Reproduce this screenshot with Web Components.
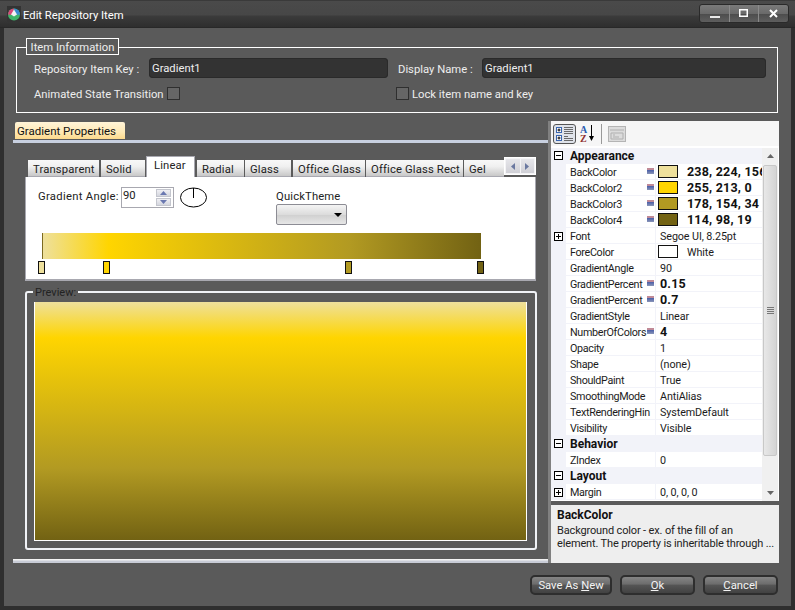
<!DOCTYPE html>
<html>
<head>
<meta charset="utf-8">
<title>Edit Repository Item</title>
<style>
  html, body { margin: 0; padding: 0; background: #5a5a5a; }
  body { font: 11.25px Roboto, "Open Sans", sans-serif; }
</style>
</head>
<body>
<edit-window>
  <window-titlebar slot="title">Edit Repository Item</window-titlebar>

  <item-info></item-info>

  <div style="display:flex;margin-top:8px;height:442px;">
    <gradient-pane></gradient-pane>
    <div style="width:228px;display:flex;flex-direction:column;gap:4px;border-left:3px solid #808080;">
      <prop-grid>
        <prop-cat name="Appearance"></prop-cat>
        <prop-row name="BackColor" value="238, 224, 156" swatch="#eee09c" bold mod></prop-row>
        <prop-row name="BackColor2" value="255, 213, 0" swatch="#ffd500" bold mod></prop-row>
        <prop-row name="BackColor3" value="178, 154, 34" swatch="#b29a22" bold mod></prop-row>
        <prop-row name="BackColor4" value="114, 98, 19" swatch="#726213" bold mod></prop-row>
        <prop-row name="Font" value="Segoe UI, 8.25pt" plus></prop-row>
        <prop-row name="ForeColor" value="White" swatch="#ffffff"></prop-row>
        <prop-row name="GradientAngle" value="90"></prop-row>
        <prop-row name="GradientPercent" value="0.15" bold mod></prop-row>
        <prop-row name="GradientPercent" value="0.7" bold mod></prop-row>
        <prop-row name="GradientStyle" value="Linear"></prop-row>
        <prop-row name="NumberOfColors" value="4" bold mod></prop-row>
        <prop-row name="Opacity" value="1"></prop-row>
        <prop-row name="Shape" value="(none)"></prop-row>
        <prop-row name="ShouldPaint" value="True"></prop-row>
        <prop-row name="SmoothingMode" value="AntiAlias"></prop-row>
        <prop-row name="TextRenderingHin" value="SystemDefault"></prop-row>
        <prop-row name="Visibility" value="Visible"></prop-row>
        <prop-cat name="Behavior"></prop-cat>
        <prop-row name="ZIndex" value="0"></prop-row>
        <prop-cat name="Layout"></prop-cat>
        <prop-row name="Margin" value="0, 0, 0, 0" plus></prop-row>
      </prop-grid>
      <prop-desc name="BackColor">Background color - ex. of the fill of an<br>element. The property is inheritable through ...</prop-desc>
    </div>
  </div>

  <div style="display:flex;justify-content:flex-end;gap:8px;margin-top:12px;padding-right:1px;">
    <dark-button style="width:82px"><span>Save As <u>N</u>ew</span></dark-button>
    <dark-button style="width:75px"><u>O</u>k</dark-button>
    <dark-button style="width:75px"><u>C</u>ancel</dark-button>
  </div>
</edit-window>

<script>
class EditWindow extends HTMLElement {
  constructor() {
    super();
    this.attachShadow({ mode: "open" });
    this.shadowRoot.innerHTML = `
    <style>
      :host {
        display: flex;
        flex-direction: column;
        width: 795px;
        height: 610px;
        box-sizing: border-box;
        background: #5a5a5a;
        color: #fff;
        overflow: hidden;
      }
      .body {
        flex: 1;
        border-left: 4px solid #2f2f2f;
        border-right: 4px solid #2f2f2f;
        border-bottom: 4px solid #2f2f2f;
        padding: 10px 12px 0 9px;
        box-sizing: border-box;
      }
    </style>
    <slot name="title"></slot>
    <div class="body"><slot></slot></div>`;
  }
}

class WindowTitlebar extends HTMLElement {
  constructor() {
    super();
    this.attachShadow({ mode: "open" });
    this.shadowRoot.innerHTML = `
    <style>
      :host {
        display: flex;
        align-items: center;
        height: 28px;
        box-sizing: border-box;
        padding: 0 6px 0 7px;
        color: #fff;
        font-size: 11.25px;
        background: linear-gradient(#2a2a2a 0, #4a4a4a 1px, #474747 15px, #3b3b3b 16px, #2e2e2e 27px, #222 28px);
      }
      .logo { width: 14px; height: 16px; margin-right: 2px; margin-top: -1px; flex: none; }
      .label { flex: 1; margin-top: 2px; }
      .buttons {
        display: flex;
        height: 17px;
        margin-top: -1px;
        border: 1px solid #2a2a2a;
        border-radius: 3px;
        overflow: hidden;
        background: linear-gradient(#7a7a7a, #6a6a6a 50%, #4c4c4c 51%, #5e5e5e);
      }
      .buttons div {
        display: flex;
        align-items: center;
        justify-content: center;
        border-left: 1px solid #8a8a8a;
      }
      .buttons div:first-child { border-left: 0; }
    </style>
    <svg class="logo" viewBox="0 0 14 16">
      <rect width="14" height="16" fill="#333"/>
      <circle cx="7" cy="8.500" r="6" fill="#3fb56a"/>
      <path d="M1 8.500a6 6 0 0 1 6-6L6 9z" fill="#d8487a"/>
      <path d="M7 2.500a6 6 0 0 1 6 6L8 9z" fill="#3a8ad0"/>
      <path d="M7 3.500L10 8.500 7 10.500 4 8.500z" fill="#f4f4f4"/>
    </svg>
    <span class="label"><slot></slot></span>
    <div class="buttons">
      <div style="width:29px"><svg width="10" height="10" viewBox="0 0 10 10"><rect x="0" y="7" width="10" height="2" fill="#e8e8e8"/></svg></div>
      <div style="width:28px"><svg width="10" height="9" viewBox="0 0 10 9"><rect x=".75" y=".75" width="7.5" height="6.5" fill="none" stroke="#fff" stroke-width="1.5"/></svg></div>
      <div style="width:29px"><svg width="9" height="9" viewBox="0 0 9 9"><path d="M1 1l7 7M8 1l-7 7" stroke="#fff" stroke-width="2"/></svg></div>
    </div>`;
  }
}

class ItemInfo extends HTMLElement {
  constructor() {
    super();
    this.attachShadow({ mode: "open" });
    this.shadowRoot.innerHTML = `
    <style>
      :host { display: block; position: relative; padding-top: 9px; margin-left: 3px; width: 762px; color: #eee; }
      .legend {
        position: absolute;
        left: 10px;
        top: 0;
        width: 93px;
        height: 17px;
        line-height: 17px;
        text-align: center;
        box-sizing: border-box;
        background: #5a5a5a;
        border: 1px solid #fff;
      }
      .box {
        border: 1px solid #fff;
        height: 66px;
        box-sizing: border-box;
        padding: 10px 11px 0 17px;
        display: grid;
        grid-template-columns: 115px 239px 10px 84px 1fr;
        grid-template-rows: 20px 20px;
        row-gap: 5px;
        align-items: center;
      }
      .t { padding-top: 2px; white-space: nowrap; }
      .field {
        height: 20px;
        line-height: 21px;
        box-sizing: border-box;
        padding-left: 3px;
        background: #333;
        border-radius: 4px;
        box-shadow: inset 0 0 0 1px #2a2a2a;
      }
      .name { grid-column: 4; }
      .cell { display: flex; align-items: center; }
      .check { width: 13px; height: 13px; box-sizing: border-box; border: 1px solid #2f2f2f; background: #666; }
    </style>
    <div class="legend">Item Information</div>
    <div class="box">
      <span class="t">Repository Item Key :</span>
      <div class="field">Gradient1</div>
      <span class="t name">Display Name :</span>
      <div class="field">Gradient1</div>
      <div class="cell" style="grid-column:1 / 3">
        <span class="t" style="width:133px">Animated State Transition</span>
        <span class="check"></span>
      </div>
      <div class="cell" style="grid-column:3 / 6;margin-left:8px">
        <span class="check"></span>
        <span class="t" style="margin-left:3px">Lock item name and key</span>
      </div>
    </div>`;
  }
}

class GradientPane extends HTMLElement {
  constructor() {
    super();
    this.attachShadow({ mode: "open" });
    this.shadowRoot.innerHTML = `
    <style>
      :host { display: flex; flex-direction: column; width: 535px; flex: none; }
      .head {
        align-self: flex-start;
        margin: 1px 0 0 2px;
        width: 110px;
        height: 17px;
        line-height: 18px;
        box-sizing: border-box;
        padding-left: 2px;
        color: #111;
        font-size: 11.5px;
        white-space: nowrap;
        border-radius: 2px 2px 0 0;
        background: linear-gradient(#fff4d8, #ffe9b4 60%, #fcd98c);
      }
      .rule { height: 3px; margin-top: 1px; background: #c8d0e0; }
      .inner { flex: 1; padding: 14px 12px 0 12px; }
      .tabs { display: flex; align-items: flex-end; height: 20px; position: relative; }
      .panel {
        height: 104px;
        box-sizing: border-box;
        background: #fff;
        border: 2px solid #a8a8b0;
        border-top: 0;
        border-right-width: 1px;
        border-left-width: 1px;
        color: #222;
        padding: 10px 0 0 12px;
      }
      .top { display: flex; align-items: flex-start; }
      .lbl { margin-top: 3px; width: 83px; letter-spacing: .3px; white-space: nowrap; }
      .spin {
        width: 53px;
        height: 21px;
        box-sizing: border-box;
        border: 1px solid #a8a8b0;
        display: flex;
        justify-content: space-between;
        padding: 0 0 0 1px;
        line-height: 16px;
      }
      .spin .arrows { display: flex; flex-direction: column; padding: 1px 2px; gap: 1px; }
      .spin .arrows i {
        display: flex; align-items: center; justify-content: center;
        width: 13px; height: 7px;
        background: linear-gradient(#f0f0f4, #d4d6de);
        border: 1px solid #c4c6ce;
        box-sizing: content-box;
      }
      .clock { margin-left: 6px; }
      .theme { margin-left: 69px; margin-top: -1px; }
      .theme .t { line-height: 15px; letter-spacing: .15px; margin-top: 3px; }
      .combo {
        width: 71px;
        height: 21px;
        box-sizing: border-box;
        border: 1px solid #8c8c94;
        border-radius: 2px;
        background: linear-gradient(#f4f4f4, #dcdcdc 50%, #cfcfcf 51%, #e6e6e6);
        display: flex;
        align-items: center;
        justify-content: flex-end;
        padding-right: 4px;
      }
      .track { position: relative; width: 439px; margin: 8px 0 0 4px; }
      .bar {
        height: 26px;
        border-left: 1px solid #7c6a20;
        box-sizing: border-box;
        background: linear-gradient(90deg, #eee09c, #ffd500 15%, #b29a22 70%, #726213);
      }
      .stop {
        position: absolute;
        top: 28px;
        width: 7px;
        height: 13px;
        box-sizing: border-box;
        border: 1px solid #111;
      }
      .preview {
        position: relative;
        margin-top: 10px;
        width: 512px;
        height: 259px;
        box-sizing: border-box;
        border: 2px solid #f0f2f6;
        border-radius: 3px;
        padding: 9px 8px 7px 7px;
      }
      .preview .legend {
        position: absolute;
        left: 6px;
        top: -6px;
        background: #5a5a5a;
        padding: 0 2px;
        line-height: 12px;
        font-size: 11px;
        color: #222;
      }
      .fill {
        height: 100%;
        box-sizing: border-box;
        border: 1px solid #fff;
        border-top: 0;
        background: linear-gradient(#eee09c, #ffd500 15%, #b29a22 70%, #726213);
      }
      .rule2 { height: 4px; margin-top: 9px; background: linear-gradient(#f2f2f2 0 1px, #c8ccd6 2px); }
    </style>
    <div class="head">Gradient Properties</div>
    <div class="rule"></div>
    <div class="inner">
      <div class="tabs">
        <strip-tab style="margin-left:3px;width:71px">Transparent</strip-tab>
        <strip-tab style="margin-left:2px;width:44px">Solid</strip-tab>
        <strip-tab active style="margin-left:1px;width:49px">Linear</strip-tab>
        <strip-tab style="margin-left:2px;width:47px">Radial</strip-tab>
        <strip-tab style="margin-left:1px;width:46px">Glass</strip-tab>
        <strip-tab style="margin-left:2px;width:72px">Office Glass</strip-tab>
        <strip-tab style="margin-left:1px;width:97px">Office Glass Rect</strip-tab>
        <strip-tab style="margin-left:1px;width:40px">Gel</strip-tab>
        <strip-scroll></strip-scroll>
      </div>
      <div class="panel">
        <div class="top">
          <span class="lbl">Gradient Angle:</span>
          <div class="spin">
            <span>90</span>
            <div class="arrows">
              <i><svg width="7" height="4"><path d="M3.500 0L7 4H0z" fill="#6a78b0"/></svg></i>
              <i><svg width="7" height="4"><path d="M0 0h7L3.500 4z" fill="#6a78b0"/></svg></i>
            </div>
          </div>
          <svg class="clock" width="27" height="21" viewBox="0 0 27 21">
            <ellipse cx="13.500" cy="10.500" rx="13" ry="9.500" fill="#fff" stroke="#000"/>
            <path d="M13.500 1v10" stroke="#000"/>
          </svg>
          <div class="theme">
            <div class="t">QuickTheme</div>
            <div class="combo"><svg width="8" height="4"><path d="M0 0h8L4 4z" fill="#000"/></svg></div>
          </div>
        </div>
        <div class="track">
          <div class="bar"></div>
          <span class="stop" style="left:-4px;background:#eee09c"></span>
          <span class="stop" style="left:61px;background:#ffd500"></span>
          <span class="stop" style="left:303px;background:#b29a22"></span>
          <span class="stop" style="left:435px;background:#726213"></span>
        </div>
      </div>
      <div class="preview">
        <span class="legend">Preview:</span>
        <div class="fill"></div>
      </div>
    </div>
    <div class="rule2"></div>`;
  }
}

class StripTab extends HTMLElement {
  constructor() {
    super();
    this.attachShadow({ mode: "open" });
    this.shadowRoot.innerHTML = `
    <style>
      :host {
        display: block;
        height: 17px;
        box-sizing: border-box;
        padding-left: 5px;
        line-height: 19px;
        color: #222;
        letter-spacing: .15px;
        white-space: nowrap;
        overflow: hidden;
        background: linear-gradient(#f8f8f8, #f0f0f0 40%, #c8c8c8);
        border-bottom: 1px solid #a8a8b0;
        flex: none;
      }
      :host([active]) {
        height: 21px;
        background: #fff;
        border: 1px solid #a8a8b0;
        border-bottom: 0;
        line-height: 18px;
        padding-left: 7px;
      }
    </style>
    <slot></slot>`;
  }
}

class StripScroll extends HTMLElement {
  constructor() {
    super();
    this.attachShadow({ mode: "open" });
    this.shadowRoot.innerHTML = `
    <style>
      :host {
        display: flex;
        position: relative;
        top: -2px;
        width: 33px;
        height: 18px;
        box-sizing: border-box;
        background: #f4f4f6;
        border: 1px solid #fff;
        padding: 1px;
        gap: 1px;
      }
      i {
        flex: 1;
        display: flex;
        align-items: center;
        justify-content: center;
        background: linear-gradient(#e6e6ea, #d0d0d6);
      }
    </style>
    <i><svg width="4" height="7"><path d="M4 0v7L0 3.500z" fill="#6a78a0"/></svg></i>
    <i><svg width="4" height="7"><path d="M0 0v7L4 3.500z" fill="#6a78a0"/></svg></i>`;
  }
}

class PropGrid extends HTMLElement {
  constructor() {
    super();
    this.attachShadow({ mode: "open" });
    this.shadowRoot.innerHTML = `
    <style>
      :host {
        display: flex;
        flex-direction: column;
        height: 380px;
        flex: none;
        color: #222;
        background: #fff;
      }
      .tools {
        height: 26px;
        box-sizing: border-box;
        flex: none;
        display: flex;
        align-items: center;
        padding: 1px 0 0 2px;
        background: #f6f6f6;
        border-bottom: 1px solid #fff;
      }
      .cat-btn {
        width: 23px;
        height: 20px;
        box-sizing: border-box;
        border: 1px solid #555;
        border-radius: 3px;
        background: #dfe3ea;
      }
      .az { width: 17px; height: 19px; margin-left: 4px; display: flex; font: bold 10px/9px "Liberation Serif", serif; }
      .az b { display: block; }
      .sep { width: 1px; height: 20px; background: #999; margin: 0 6px 0 4px; }
      .pages { width: 18px; height: 16px; }
      .main { flex: 1; display: flex; padding-top: 1px; min-height: 0; }
      .rows { flex: 1; min-width: 0; }
      .scroll {
        width: 16px;
        flex: none;
        display: flex;
        flex-direction: column;
        align-items: stretch;
        background: #f0f0f0;
        margin-right: 1px;
      }
      .scroll .a { height: 16px; display: flex; align-items: center; justify-content: center; flex: none; }
      .thumb {
        height: 291px;
        margin: 1px 1px 0;
        box-sizing: border-box;
        border: 1px solid #c8c8c8;
        border-radius: 2px;
        background: linear-gradient(90deg, #e8e8e8, #d4d4d4);
        display: flex;
        align-items: center;
        justify-content: center;
      }
      .gap { flex: 1; }
    </style>
    <div class="tools">
      <div class="cat-btn">
        <svg width="21" height="18" viewBox="0 0 21 18">
          <rect x="2.500" y="2.500" width="5" height="5" fill="#fff" stroke="#3a66b0"/>
          <path d="M3.500 5h3M5 3.500v3" stroke="#000"/>
          <rect x="2.500" y="10.500" width="5" height="5" fill="#fff" stroke="#3a66b0"/>
          <path d="M3.500 13h3M5 11.500v3" stroke="#000"/>
          <path d="M10 2.500h9M10 4.500h9M10 6.500h9M10 8.500h9M10 11.500h4M10 13.500h9M10 15.500h9" stroke="#6a6a6a"/>
        </svg>
      </div>
      <div class="az">
        <span style="display:flex;flex-direction:column"><b style="color:#2a5cb0">A</b><b style="color:#903030">Z</b></span>
        <svg width="7" height="19" viewBox="0 0 7 19" style="margin-left:1px"><path d="M3.500 0v14" stroke="#000"/><path d="M1 11h5l-2.500 5z" fill="#000"/></svg>
      </div>
      <div class="sep"></div>
      <svg class="pages" viewBox="0 0 18 16">
        <rect x=".5" y=".5" width="17" height="15" fill="#dcdcdc" stroke="#b4b4b4"/>
        <path d="M2 4h14M3 7h12v6H3zM5 9h2M5 11h6" fill="none" stroke="#b0b0b0"/>
      </svg>
    </div>
    <div class="main">
      <div class="rows"><slot></slot></div>
      <div class="scroll">
        <div class="a"><svg width="7" height="4"><path d="M3.500 0L7 4H0z" fill="#666"/></svg></div>
        <div class="thumb"><svg width="7" height="7"><path d="M0 .5h7M0 2.500h7M0 4.500h7M0 6.500h7" stroke="#777"/></svg></div>
        <div class="gap"></div>
        <div class="a"><svg width="7" height="4"><path d="M0 0h7L3.500 4z" fill="#666"/></svg></div>
      </div>
    </div>`;
  }
}

class PropCat extends HTMLElement {
  constructor() {
    super();
    this.attachShadow({ mode: "open" });
    this.shadowRoot.innerHTML = `
    <style>
      :host {
        display: flex;
        align-items: center;
        height: 16px;
        box-sizing: border-box;
        padding-bottom: 1px;
        background: #f2f3f9;
        font-weight: bold;
        font-size: 12px;
        color: #111;
      }
      svg { margin: 0 7px 0 3px; flex: none; }
    </style>
    <svg width="9" height="9"><rect x=".5" y=".5" width="8" height="8" fill="#fff" stroke="#000"/><path d="M2 4.500h5" stroke="#000"/></svg>
    <span>${this.getAttribute("name")}</span>`;
  }
}

class PropRow extends HTMLElement {
  constructor() {
    super();
    this.attachShadow({ mode: "open" });
    const swatch = this.getAttribute("swatch");
    const plus = this.hasAttribute("plus");
    const mod = this.hasAttribute("mod");
    this.shadowRoot.innerHTML = `
    <style>
      :host {
        display: flex;
        height: 16px;
        line-height: 17px;
        font-size: 10.75px;
        letter-spacing: -.32px;
        background: #f2f3f9;
        color: #1c1c1c;
      }
      .gutter { width: 15px; flex: none; display: flex; align-items: center; padding-left: 3px; box-sizing: border-box; }
      .name {
        position: relative;
        width: 89px;
        flex: none;
        box-sizing: border-box;
        padding-left: 4px;
        overflow: hidden;
        white-space: nowrap;
        background: #fff;
        border-bottom: 1px solid #f2f3f9;
      }
      .mod {
        position: absolute;
        right: 1px;
        top: 4px;
        width: 7px;
        height: 6px;
        background: linear-gradient(#c08a98 0 35%, #4a5ea8 35%, #8a96b8);
      }
      .value {
        flex: 1;
        min-width: 0;
        margin-left: 1px;
        box-sizing: border-box;
        padding-left: 4px;
        display: flex;
        align-items: center;
        overflow: hidden;
        white-space: nowrap;
        background: #fff;
        border-bottom: 1px solid #f2f3f9;
        letter-spacing: -.1px;
      }
      .plain { padding-top: 2px; }
      .sw {
        width: 20px;
        height: 13px;
        box-sizing: border-box;
        border: 1px solid #111;
        margin: 0 9px 0 -2px;
        flex: none;
      }
      .bold { font-weight: bold; font-size: 12.5px; color: #111; letter-spacing: .2px; }
    </style>
    <div class="gutter">${plus ? `<svg width="9" height="9"><rect x=".5" y=".5" width="8" height="8" fill="#fff" stroke="#000"/><path d="M2 4.500h5M4.500 2v5" stroke="#000"/></svg>` : ""}</div>
    <div class="name">${this.getAttribute("name")}${mod ? `<span class="mod"></span>` : ""}</div>
    <div class="value">
      ${swatch ? `<span class="sw" style="background:${swatch}"></span>` : ""}
      <span class="${this.hasAttribute("bold") ? "bold" : "plain"}">${this.getAttribute("value")}</span>
    </div>`;
  }
}

class PropDesc extends HTMLElement {
  constructor() {
    super();
    this.attachShadow({ mode: "open" });
    this.shadowRoot.innerHTML = `
    <style>
      :host {
        display: block;
        height: 58px;
        box-sizing: border-box;
        padding: 3px 2px 3px 6px;
        background: #eeeeee;
        color: #222;
        font-size: 11px;
        letter-spacing: -.15px;
        line-height: 13px;
        white-space: nowrap;
      }
      b { display: block; color: #111; line-height: 15px; margin-bottom: 1px; font-size: 12px; letter-spacing: 0; }
    </style>
    <b>${this.getAttribute("name")}</b>
    <slot></slot>`;
  }
}

class DarkButton extends HTMLElement {
  constructor() {
    super();
    this.attachShadow({ mode: "open" });
    this.shadowRoot.innerHTML = `
    <style>
      :host {
        display: flex;
        align-items: center;
        justify-content: center;
        height: 20px;
        box-sizing: border-box;
        padding-top: 1px;
        color: #f4f4f4;
        border: 2px solid #2e2e2e;
        border-radius: 5px;
        background: linear-gradient(#858585, #6c6c6c 45%, #555 50%, #424242);
      }
    </style>
    <slot></slot>`;
  }
}

customElements.define("edit-window", EditWindow);
customElements.define("window-titlebar", WindowTitlebar);
customElements.define("item-info", ItemInfo);
customElements.define("gradient-pane", GradientPane);
customElements.define("strip-tab", StripTab);
customElements.define("strip-scroll", StripScroll);
customElements.define("prop-grid", PropGrid);
customElements.define("prop-cat", PropCat);
customElements.define("prop-row", PropRow);
customElements.define("prop-desc", PropDesc);
customElements.define("dark-button", DarkButton);
</script>
</body>
</html>
